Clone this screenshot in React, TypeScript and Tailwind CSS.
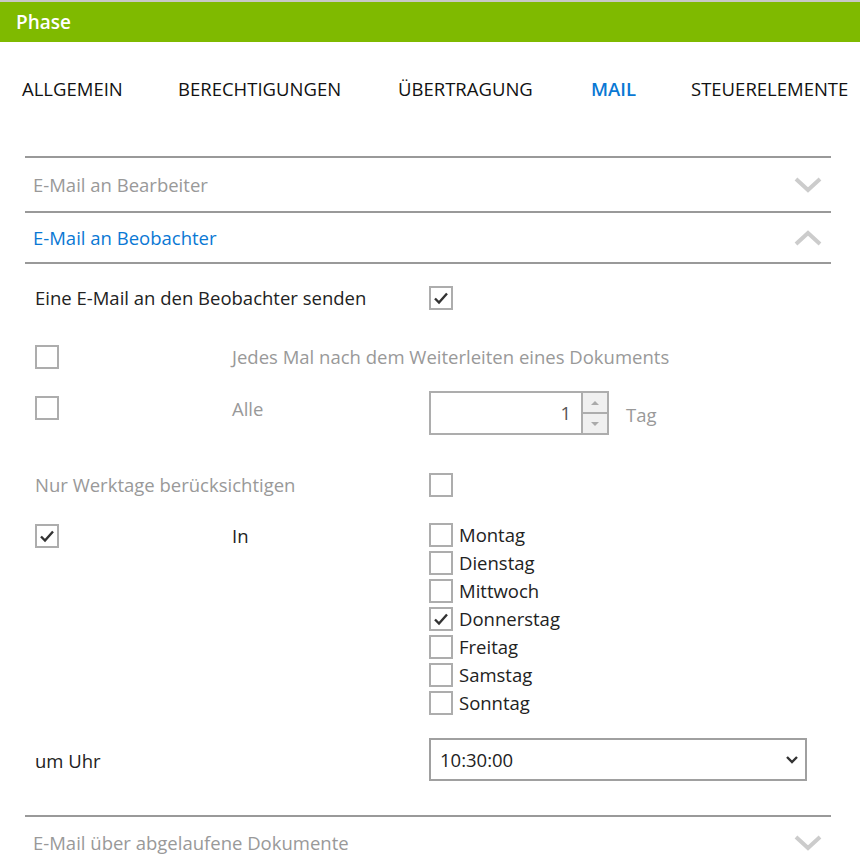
import React from 'react'

const font = { fontFamily: '"Open Sans", "Noto Sans", sans-serif' }

function Chevron({ up = false }: { up?: boolean }) {
  return (
    <svg width="28" height="16" viewBox="0 0 28 16" className="shrink-0">
      <path
        d={up ? 'M2 14 L14 3 L26 14' : 'M2 2 L14 13 L26 2'}
        fill="none"
        stroke="#cccccc"
        strokeWidth="4"
      />
    </svg>
  )
}

function Box({ checked = false }: { checked?: boolean }) {
  return (
    <div className="w-6 h-6 border-2 border-[#adadad] bg-white flex items-center justify-center shrink-0">
      {checked && (
        <svg width="16" height="14" viewBox="0 0 16 14">
          <path d="M2 7.5 L6 11.5 L14 2.5" fill="none" stroke="#333" strokeWidth="2.4" />
        </svg>
      )}
    </div>
  )
}

function SectionHead({ title, open = false, h }: { title: string; open?: boolean; h: string }) {
  return (
    <div className={`flex items-center justify-between ${h} pl-2 pr-[9px] border-t-2 border-[#999]`}>
      <span className={`text-[18.5px] ${open ? 'text-[#0a78d4]' : 'text-[#999]'}`}>{title}</span>
      <Chevron up={open} />
    </div>
  )
}

const days: [string, boolean][] = [
  ['Montag', false],
  ['Dienstag', false],
  ['Mittwoch', false],
  ['Donnerstag', true],
  ['Freitag', false],
  ['Samstag', false],
  ['Sonntag', false],
]

export default function App() {
  return (
    <div className="w-[860px] h-[858px] bg-white overflow-hidden" style={font}>
      <div className="h-[42px] border-t-2 border-[#c8c8c8] bg-[#7fba00] flex items-center pl-4">
        <span className="text-white text-[19px] font-semibold">Phase</span>
      </div>

      <div className="flex h-[93px] items-center pl-[22px] text-[18.5px] text-[#111] whitespace-nowrap">
        <span className="w-[156px]">ALLGEMEIN</span>
        <span className="w-[220px]">BERECHTIGUNGEN</span>
        <span className="w-[193px]">ÜBERTRAGUNG</span>
        <span className="w-[100px] text-[#0a78d4] font-semibold">MAIL</span>
        <span>STEUERELEMENTE</span>
      </div>

      <div className="ml-[25px] w-[806px] mt-[21px]">
        <SectionHead title="E-Mail an Bearbeiter" h="h-[55px]" />
        <SectionHead title="E-Mail an Beobachter" open h="h-[51px]" />

        <div className="border-t-2 border-[#999] pl-[10px] pt-[20px] pb-[34px] text-[18.5px]">
          <div className="grid grid-cols-[394px_1fr] items-center h-[28px]">
            <span className="text-[#222]">Eine E-Mail an den Beobachter senden</span>
            <Box checked />
          </div>

          <div className="grid grid-cols-[197px_1fr] items-center mt-[31px] h-[24px]">
            <Box />
            <span className="text-[#999]">Jedes Mal nach dem Weiterleiten eines Dokuments</span>
          </div>

          <div className="grid grid-cols-[197px_197px_1fr] items-start mt-[24px]">
            <div className="pt-[5px]"><Box /></div>
            <span className="text-[#999] pt-[4px]">Alle</span>
            <div className="flex items-center">
              <div className="flex w-[180px] h-[44px] border-2 border-[#adadad]">
                <div className="flex-1 flex items-center justify-end pr-[10px] text-[#555]">1</div>
                <div className="w-[26px] flex flex-col border-l-2 border-[#adadad] bg-[#adadad] gap-[2px]">
                  <div className="flex-1 bg-[#f0f0f0] flex items-center justify-center">
                    <svg width="10" height="6" viewBox="0 0 10 6"><path d="M1 5 L5 1 L9 5 Z" fill="#aaa" /></svg>
                  </div>
                  <div className="flex-1 bg-[#f0f0f0] flex items-center justify-center">
                    <svg width="10" height="6" viewBox="0 0 10 6"><path d="M1 1 L5 5 L9 1 Z" fill="#aaa" /></svg>
                  </div>
                </div>
              </div>
              <span className="ml-[17px] text-[#999] pt-[4px]">Tag</span>
            </div>
          </div>

          <div className="grid grid-cols-[394px_1fr] items-center mt-[36px] h-[26px]">
            <span className="text-[#999]">Nur Werktage berücksichtigen</span>
            <Box />
          </div>

          <div className="grid grid-cols-[197px_197px_1fr] items-start mt-[24px]">
            <div className="pt-[3px]"><Box checked /></div>
            <span className="text-[#222] pt-[1px]">In</span>
            <div className="flex flex-col gap-[4px] pt-[2px]">
              {days.map(([d, c]) => (
                <div key={d} className="flex items-center gap-[6px] h-[24px]">
                  <Box checked={c} />
                  <span className="text-[#222]">{d}</span>
                </div>
              ))}
            </div>
          </div>

          <div className="grid grid-cols-[394px_1fr] items-center mt-[23px]">
            <span className="text-[#222] pt-[2px]">um Uhr</span>
            <div className="w-[378px] h-[43px] border-2 border-[#a0a0a0] flex items-center justify-between pl-[9px] pr-[6px]">
              <span className="text-[#222]">10:30:00</span>
              <svg width="14" height="10" viewBox="0 0 14 10"><path d="M2 2 L7 7 L12 2" fill="none" stroke="#333" strokeWidth="2.4" /></svg>
            </div>
          </div>
        </div>

        <SectionHead title="E-Mail über abgelaufene Dokumente" h="h-[53px]" />
      </div>
    </div>
  )
}
